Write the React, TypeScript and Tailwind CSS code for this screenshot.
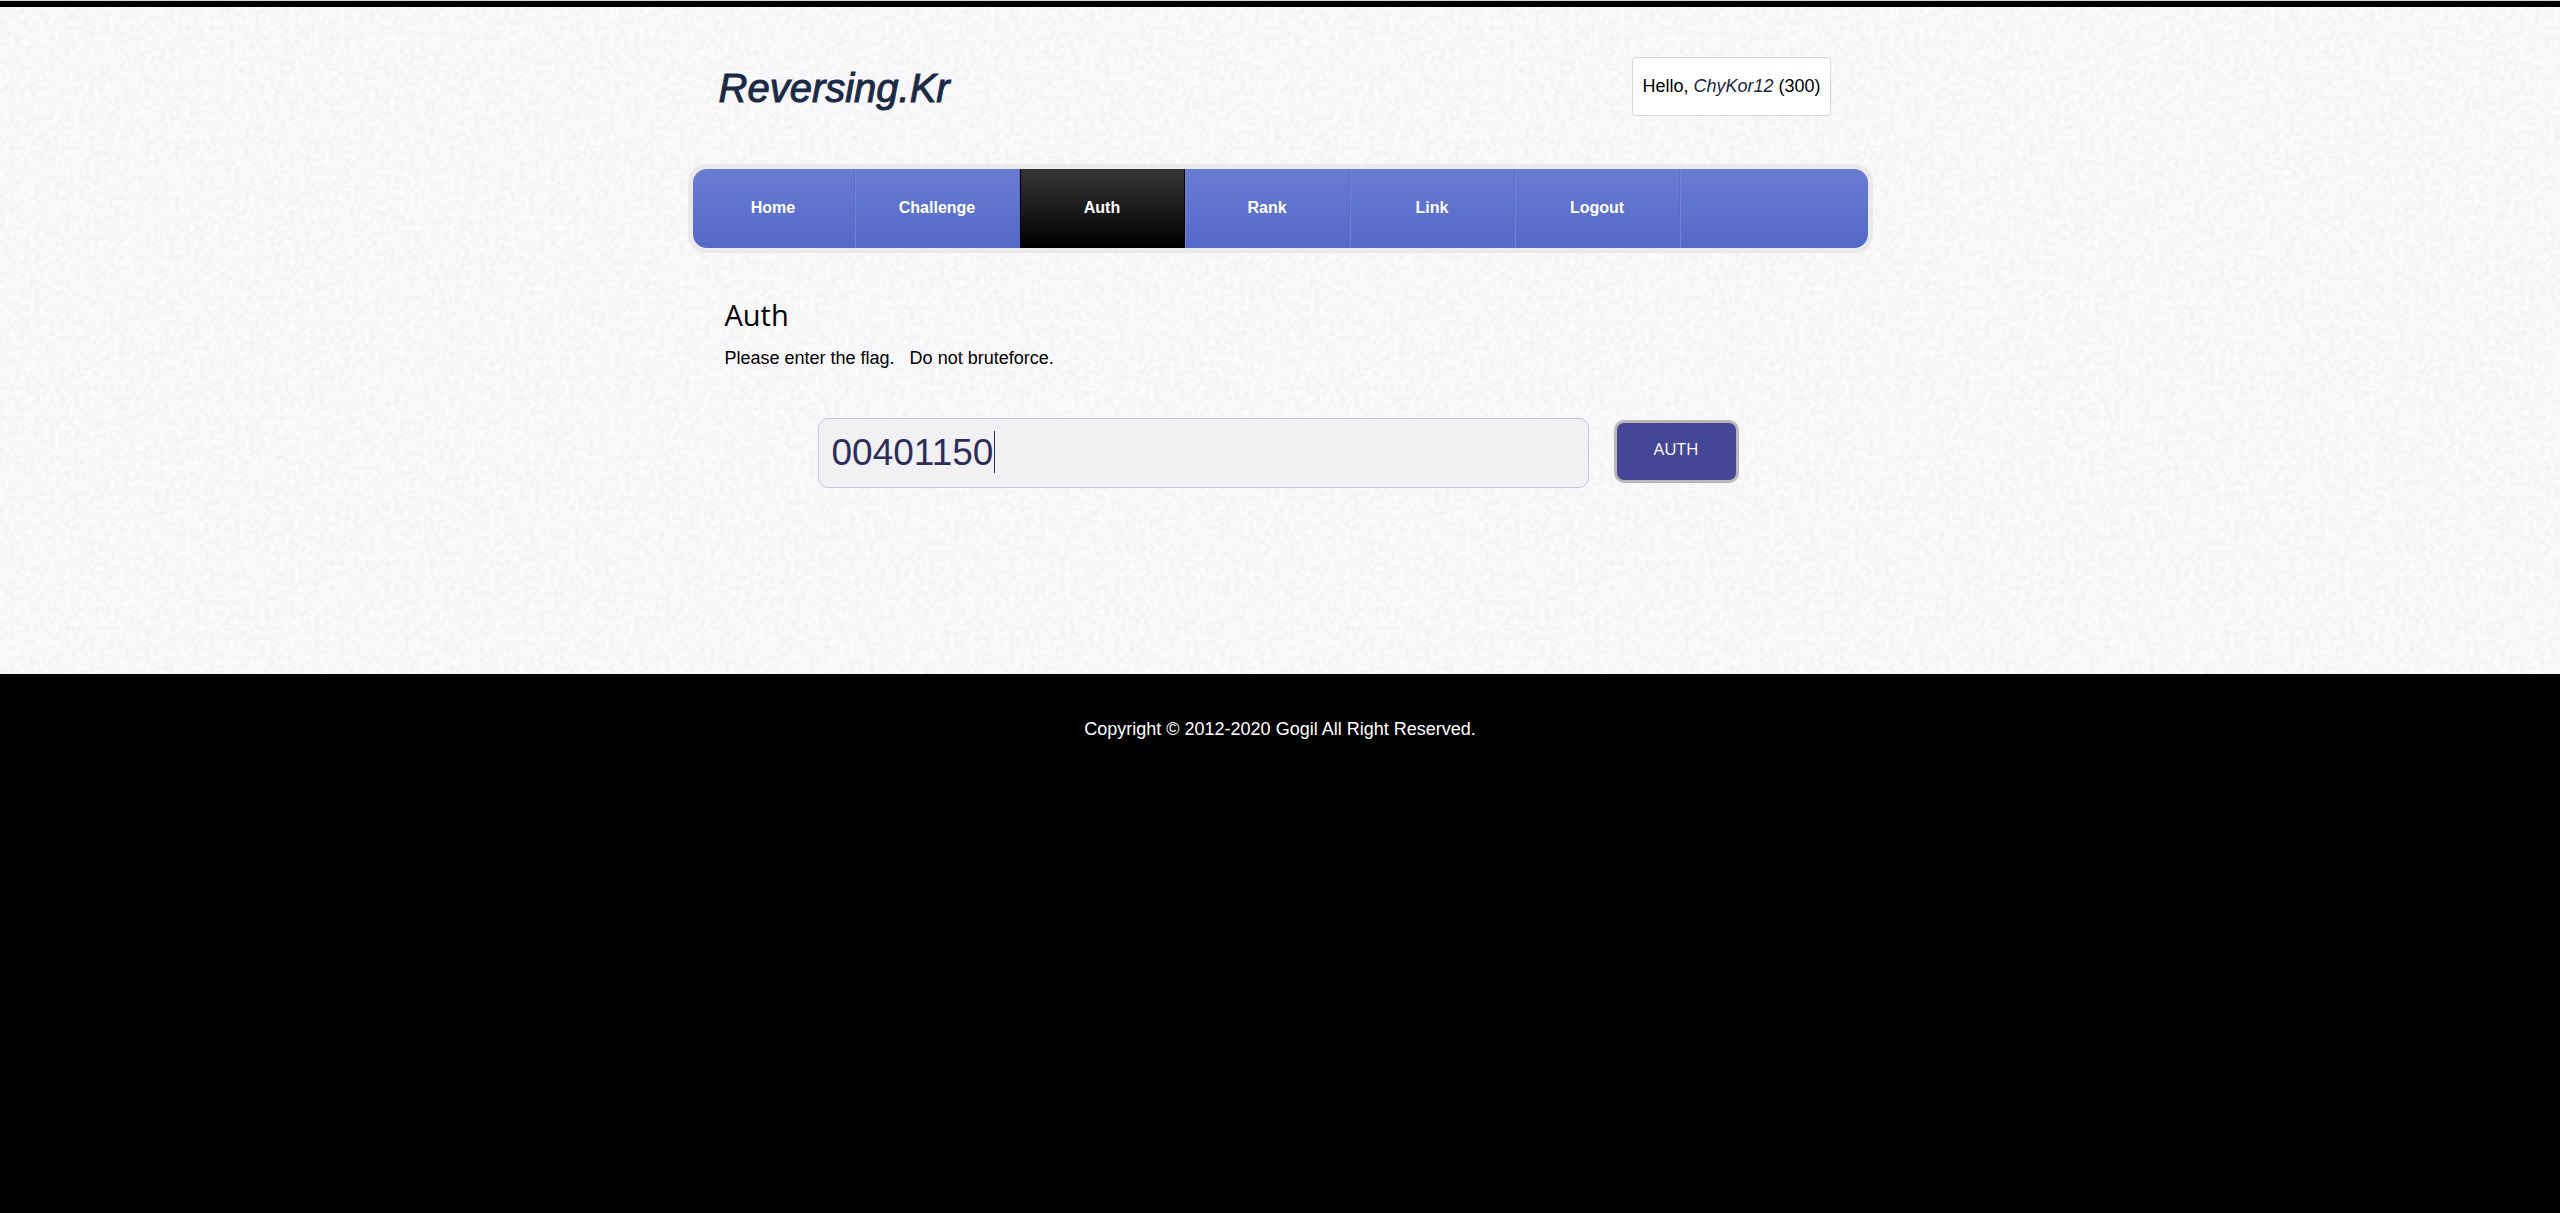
import React, { useState } from "react";

const links = ["Home", "Challenge", "Auth", "Rank", "Link", "Logout"];

function PaperTexture() {
  return (
    <svg className="absolute inset-0 h-full w-full" aria-hidden="true">
      <filter id="paper" x="0" y="0" width="100%" height="100%" colorInterpolationFilters="sRGB">
        <feTurbulence type="fractalNoise" baseFrequency="0.2 0.2" numOctaves="2" seed="4" />
        <feColorMatrix values="0.06 0 0 0 0.941  0.06 0 0 0 0.941  0.06 0 0 0 0.949  0 0 0 0 1" />
      </filter>
      <rect width="100%" height="100%" filter="url(#paper)" />
    </svg>
  );
}

function NavItem({ label }: { label: string }) {
  const active = label === "Auth";
  return (
    <li
      className={
        active
          ? "-ml-px w-[166px] border-r border-[#7483d6]"
          : "w-[165px] border-r border-[#7483d6] first:w-[163px]"
      }
    >
      <a
        href={"#" + label.toLowerCase()}
        aria-current={active ? "page" : undefined}
        className={
          active
            ? "flex h-full items-center justify-center border-x border-black bg-linear-to-b/srgb from-[#363636] to-black pb-0.5"
            : "flex h-full items-center justify-center border-r border-[#5b6cc4] pb-0.5"
        }
      >
        {label}
      </a>
    </li>
  );
}

export default function App() {
  const [flag, setFlag] = useState("00401150");
  return (
    <div className="min-h-screen bg-black font-['Liberation_Sans',Arial,sans-serif] text-lg text-black">
      <div className="relative border-t border-[#d5d9dc] bg-[#f8f8fa]">
        <PaperTexture />
        <div className="relative border-t-6 border-black pb-[186px]">
          <div className="mx-auto max-w-[1185px]">
            <header className="flex items-start justify-between pt-[50px] pr-[42px] pl-[31px]">
              <a href="#home" className="mt-2 text-[40px] leading-[46px] text-[#1b2a44] italic [-webkit-text-stroke:1px_#1b2a44]">
                Reversing.Kr
              </a>
              <p className="rounded-sm border border-[#d6d6d6] bg-white px-[9px] py-4 leading-[25px]">
                Hello, <em className="text-[#22273d]">ChyKor12</em> (300)
              </p>
            </header>

            <nav className="mt-12 rounded-[18px] bg-[#eaeaea] p-[5px]" aria-label="Main">
              <ul className="flex h-[79px] overflow-hidden rounded-[14px] bg-linear-to-b from-[#6a7bd2] to-[#5469c8] text-base font-bold text-white">
                {links.map((l) => (
                  <NavItem key={l} label={l} />
                ))}
              </ul>
            </nav>

            <main className="px-[37px]">
              <h1 className="mt-10 font-['Open_Sans','Noto_Sans',sans-serif] text-[29px] leading-[44px] font-normal">Auth</h1>
              <p className="mt-[7px] leading-7">Please enter the flag. &nbsp; Do not bruteforce.</p>
              <form className="mt-[46px] flex items-start gap-[25px] pr-[97px] pl-[93px]" onSubmit={(e) => e.preventDefault()}>
                <div className="relative flex-1">
                  <input
                    type="text"
                    aria-label="Flag"
                    value={flag}
                    onChange={(e) => setFlag(e.target.value)}
                    className="block h-[70px] w-full rounded-[10px] border border-[#c7c5d8] bg-[#f1f1f3] px-[13px] text-[37px] text-[#2d2d5a] caret-transparent outline-none"
                  />
                  <span className="absolute top-[13px] left-[176px] h-[42px] w-px bg-[#2d2d5a]" />
                </div>
                <button
                  type="submit"
                  className="mt-0.5 h-[63px] w-[125px] rounded-[10px] border-3 border-[#b8b8b8] bg-[#464696] pb-1 font-['Open_Sans','Noto_Sans',sans-serif] text-[17px] text-white"
                >
                  AUTH
                </button>
              </form>
            </main>
          </div>
        </div>
      </div>
      <footer className="pt-[41px] text-center leading-7 text-white">Copyright © 2012-2020 Gogil All Right Reserved.</footer>
    </div>
  );
}
